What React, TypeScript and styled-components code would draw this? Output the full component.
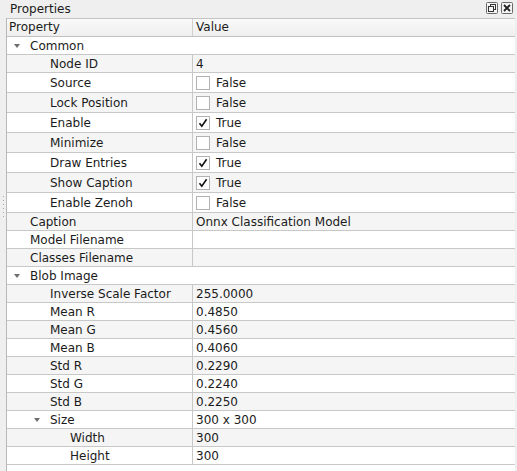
import React from "react";
import styled, { createGlobalStyle } from "styled-components";

const GlobalStyle = createGlobalStyle`
    html, body {
        margin: 0;
        padding: 0;
        background: #efefef;
    }
    body {
        font-family: "DejaVu Sans", "Liberation Sans", sans-serif;
        font-size: 12px;
        color: #1b1b1b;
    }
`;

const Dock = styled.div`
    width: 517px;
    height: 471px;
    display: flex;
    flex-direction: column;
    background: #efefef;
    overflow: hidden;
`;

const TitleBar = styled.div`
    height: 18px;
    display: flex;
    align-items: center;
    justify-content: space-between;
    padding: 0 4px 0 10px;
    box-sizing: border-box;
`;

const TitleText = styled.div`
    line-height: 16px;
`;

const TitleButtons = styled.div`
    display: flex;
    gap: 3px;
    margin-top: -2px;
`;

const Body = styled.div`
    flex: 1;
    display: flex;
    min-height: 0;
`;

const Gutter = styled.div`
    width: 6px;
    display: flex;
    flex-direction: column;
    align-items: center;
    justify-content: flex-start;
    padding-top: 178px;
    gap: 3px;
    box-sizing: border-box;
`;

const Dot = styled.div`
    width: 1px;
    height: 1px;
    background: #a8a8a8;
`;

const Tree = styled.div`
    flex: 1;
    background: #ffffff;
    border-left: 1px solid #b8b8b8;
    border-top: 1px solid #c4c4c4;
    margin-right: 2px;
    display: flex;
    flex-direction: column;
`;

const HeaderRow = styled.div`
    display: grid;
    grid-template-columns: 185px 1fr;
    height: 17px;
    background: linear-gradient(#f9f9f9, #efefef);
    border-bottom: 1px solid #c2c2c2;
`;

const HeaderCell = styled.div<{ $first?: boolean }>`
    padding-left: ${(p) => (p.$first ? "2px" : "3px")};
    line-height: 17px;
    border-left: ${(p) => (p.$first ? "none" : "1px solid #d0d0d0")};
`;

const Row = styled.div<{ $alt: boolean; $tall: boolean }>`
    display: grid;
    grid-template-columns: 185px 1fr;
    height: ${(p) => (p.$tall ? "19px" : "17px")};
    background: ${(p) => (p.$alt ? "#f5f5f5" : "#ffffff")};
    border-bottom: 1px solid #c8c8c8;
`;

const NameCell = styled.div<{ $level: number }>`
    display: flex;
    align-items: center;
    padding-left: ${(p) => p.$level * 20 + 3}px;
    white-space: nowrap;
`;

const Expander = styled.div`
    width: 20px;
    display: flex;
    align-items: center;
    padding-left: 4px;
    box-sizing: border-box;
`;

const Arrow = styled.div`
    width: 0;
    height: 0;
    border-left: 3.5px solid transparent;
    border-right: 3.5px solid transparent;
    border-top: 4px solid #6e6e6e;
`;

const Spacer = styled.div`
    width: 20px;
`;

const ValueCell = styled.div`
    display: flex;
    align-items: center;
    gap: 6px;
    padding-left: 3px;
    border-left: 1px solid #c8c8c8;
    white-space: nowrap;
`;

const EmptyValue = styled.div`
    border-left: 1px solid transparent;
`;

const CheckBox = styled.div`
    width: 12px;
    height: 12px;
    border: 1px solid #b2b2b2;
    background: #ffffff;
    display: flex;
    align-items: center;
    justify-content: center;
`;

type Item = {
    label: string;
    level: number;
    value?: string;
    check?: boolean;
    group?: boolean;
    tall?: boolean;
};

const items: Item[] = [
    { label: "Common", level: 0, group: true },
    { label: "Node ID", level: 1, value: "4" },
    { label: "Source", level: 1, check: false, tall: true },
    { label: "Lock Position", level: 1, check: false, tall: true },
    { label: "Enable", level: 1, check: true, tall: true },
    { label: "Minimize", level: 1, check: false, tall: true },
    { label: "Draw Entries", level: 1, check: true, tall: true },
    { label: "Show Caption", level: 1, check: true, tall: true },
    { label: "Enable Zenoh", level: 1, check: false, tall: true },
    { label: "Caption", level: 0, value: "Onnx Classification Model" },
    { label: "Model Filename", level: 0, value: "" },
    { label: "Classes Filename", level: 0, value: "" },
    { label: "Blob Image", level: 0, group: true },
    { label: "Inverse Scale Factor", level: 1, value: "255.0000" },
    { label: "Mean R", level: 1, value: "0.4850" },
    { label: "Mean G", level: 1, value: "0.4560" },
    { label: "Mean B", level: 1, value: "0.4060" },
    { label: "Std R", level: 1, value: "0.2290" },
    { label: "Std G", level: 1, value: "0.2240" },
    { label: "Std B", level: 1, value: "0.2250" },
    { label: "Size", level: 1, value: "300 x 300", group: true },
    { label: "Width", level: 2, value: "300" },
    { label: "Height", level: 2, value: "300" },
];

const FloatIcon = () => (
    <svg width="12" height="12" viewBox="0 0 12 12">
        <rect x="0.5" y="0.5" width="11" height="11" rx="1" fill="#f4f4f4" stroke="#6a6a6a" />
        <rect x="4.5" y="2.5" width="5" height="5" fill="none" stroke="#333" />
        <rect x="2.5" y="4.5" width="5" height="5" fill="#f4f4f4" stroke="#333" />
    </svg>
);

const CloseIcon = () => (
    <svg width="12" height="12" viewBox="0 0 12 12">
        <rect x="0.5" y="0.5" width="11" height="11" rx="1" fill="#f4f4f4" stroke="#6a6a6a" />
        <path d="M3 3 L9 9 M9 3 L3 9" stroke="#222" strokeWidth="1.8" />
    </svg>
);

const Check = () => (
    <svg width="10" height="10" viewBox="0 0 10 10">
        <path d="M1.5 5.2 L3.8 8.2 L8.6 1.2" fill="none" stroke="#111" strokeWidth="1.6" />
    </svg>
);

const App = () => {
    return (
        <Dock>
            <GlobalStyle />
            <TitleBar>
                <TitleText>Properties</TitleText>
                <TitleButtons>
                    <FloatIcon />
                    <CloseIcon />
                </TitleButtons>
            </TitleBar>
            <Body>
                <Gutter>
                    {Array.from({ length: 6 }).map((_, i) => (
                        <Dot key={i} />
                    ))}
                </Gutter>
                <Tree>
                    <HeaderRow>
                        <HeaderCell $first>Property</HeaderCell>
                        <HeaderCell>Value</HeaderCell>
                    </HeaderRow>
                    {items.map((item, i) => (
                        <Row key={item.label} $alt={i % 2 === 1} $tall={!!item.tall}>
                            <NameCell $level={item.level}>
                                {item.group ? (
                                    <Expander>
                                        <Arrow />
                                    </Expander>
                                ) : (
                                    <Spacer />
                                )}
                                {item.label}
                            </NameCell>
                            {item.group && item.value === undefined ? (
                                <EmptyValue />
                            ) : (
                                <ValueCell>
                                    {item.check !== undefined && (
                                        <CheckBox>{item.check && <Check />}</CheckBox>
                                    )}
                                    {item.check !== undefined
                                        ? item.check
                                            ? "True"
                                            : "False"
                                        : item.value}
                                </ValueCell>
                            )}
                        </Row>
                    ))}
                </Tree>
            </Body>
        </Dock>
    );
};

export default App;
